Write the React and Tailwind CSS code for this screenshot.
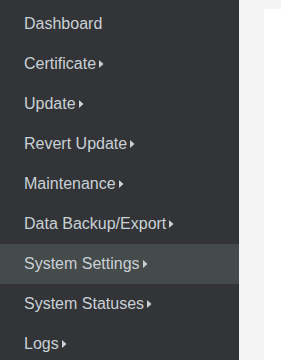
const items = [
  { label: 'Dashboard' },
  { label: 'Certificate', sub: true },
  { label: 'Update', sub: true },
  { label: 'Revert Update', sub: true },
  { label: 'Maintenance', sub: true },
  { label: 'Data Backup/Export', sub: true },
  { label: 'System Settings', sub: true, active: true },
  { label: 'System Statuses', sub: true },
  { label: 'Logs', sub: true },
]

function Caret() {
  return (
    <svg width="5" height="8" viewBox="0 0 5 8" className="ml-[3px] -mt-[1px]">
      <path d="M0 0 L4.5 4 L0 8 Z" fill="currentColor" />
    </svg>
  )
}

export default function App() {
  return (
    <div className="flex h-[360px] w-[281px] overflow-hidden bg-[#f4f4f4] font-['Liberation_Sans',Arial,sans-serif]">
      <nav className="w-[239px] shrink-0 bg-[#323437] pt-[4px]">
        {items.map((it) => (
          <div
            key={it.label}
            className={`flex h-[40px] items-center pl-[24px] text-[16px] text-[#c9d1d6] ${it.active ? 'bg-[#454a4b]' : ''}`}
          >
            <span>{it.label}</span>
            {it.sub && <Caret />}
          </div>
        ))}
      </nav>
      <div className="flex-1 pl-[25px] pt-[9px]">
        <div className="h-full bg-white" />
      </div>
    </div>
  )
}
